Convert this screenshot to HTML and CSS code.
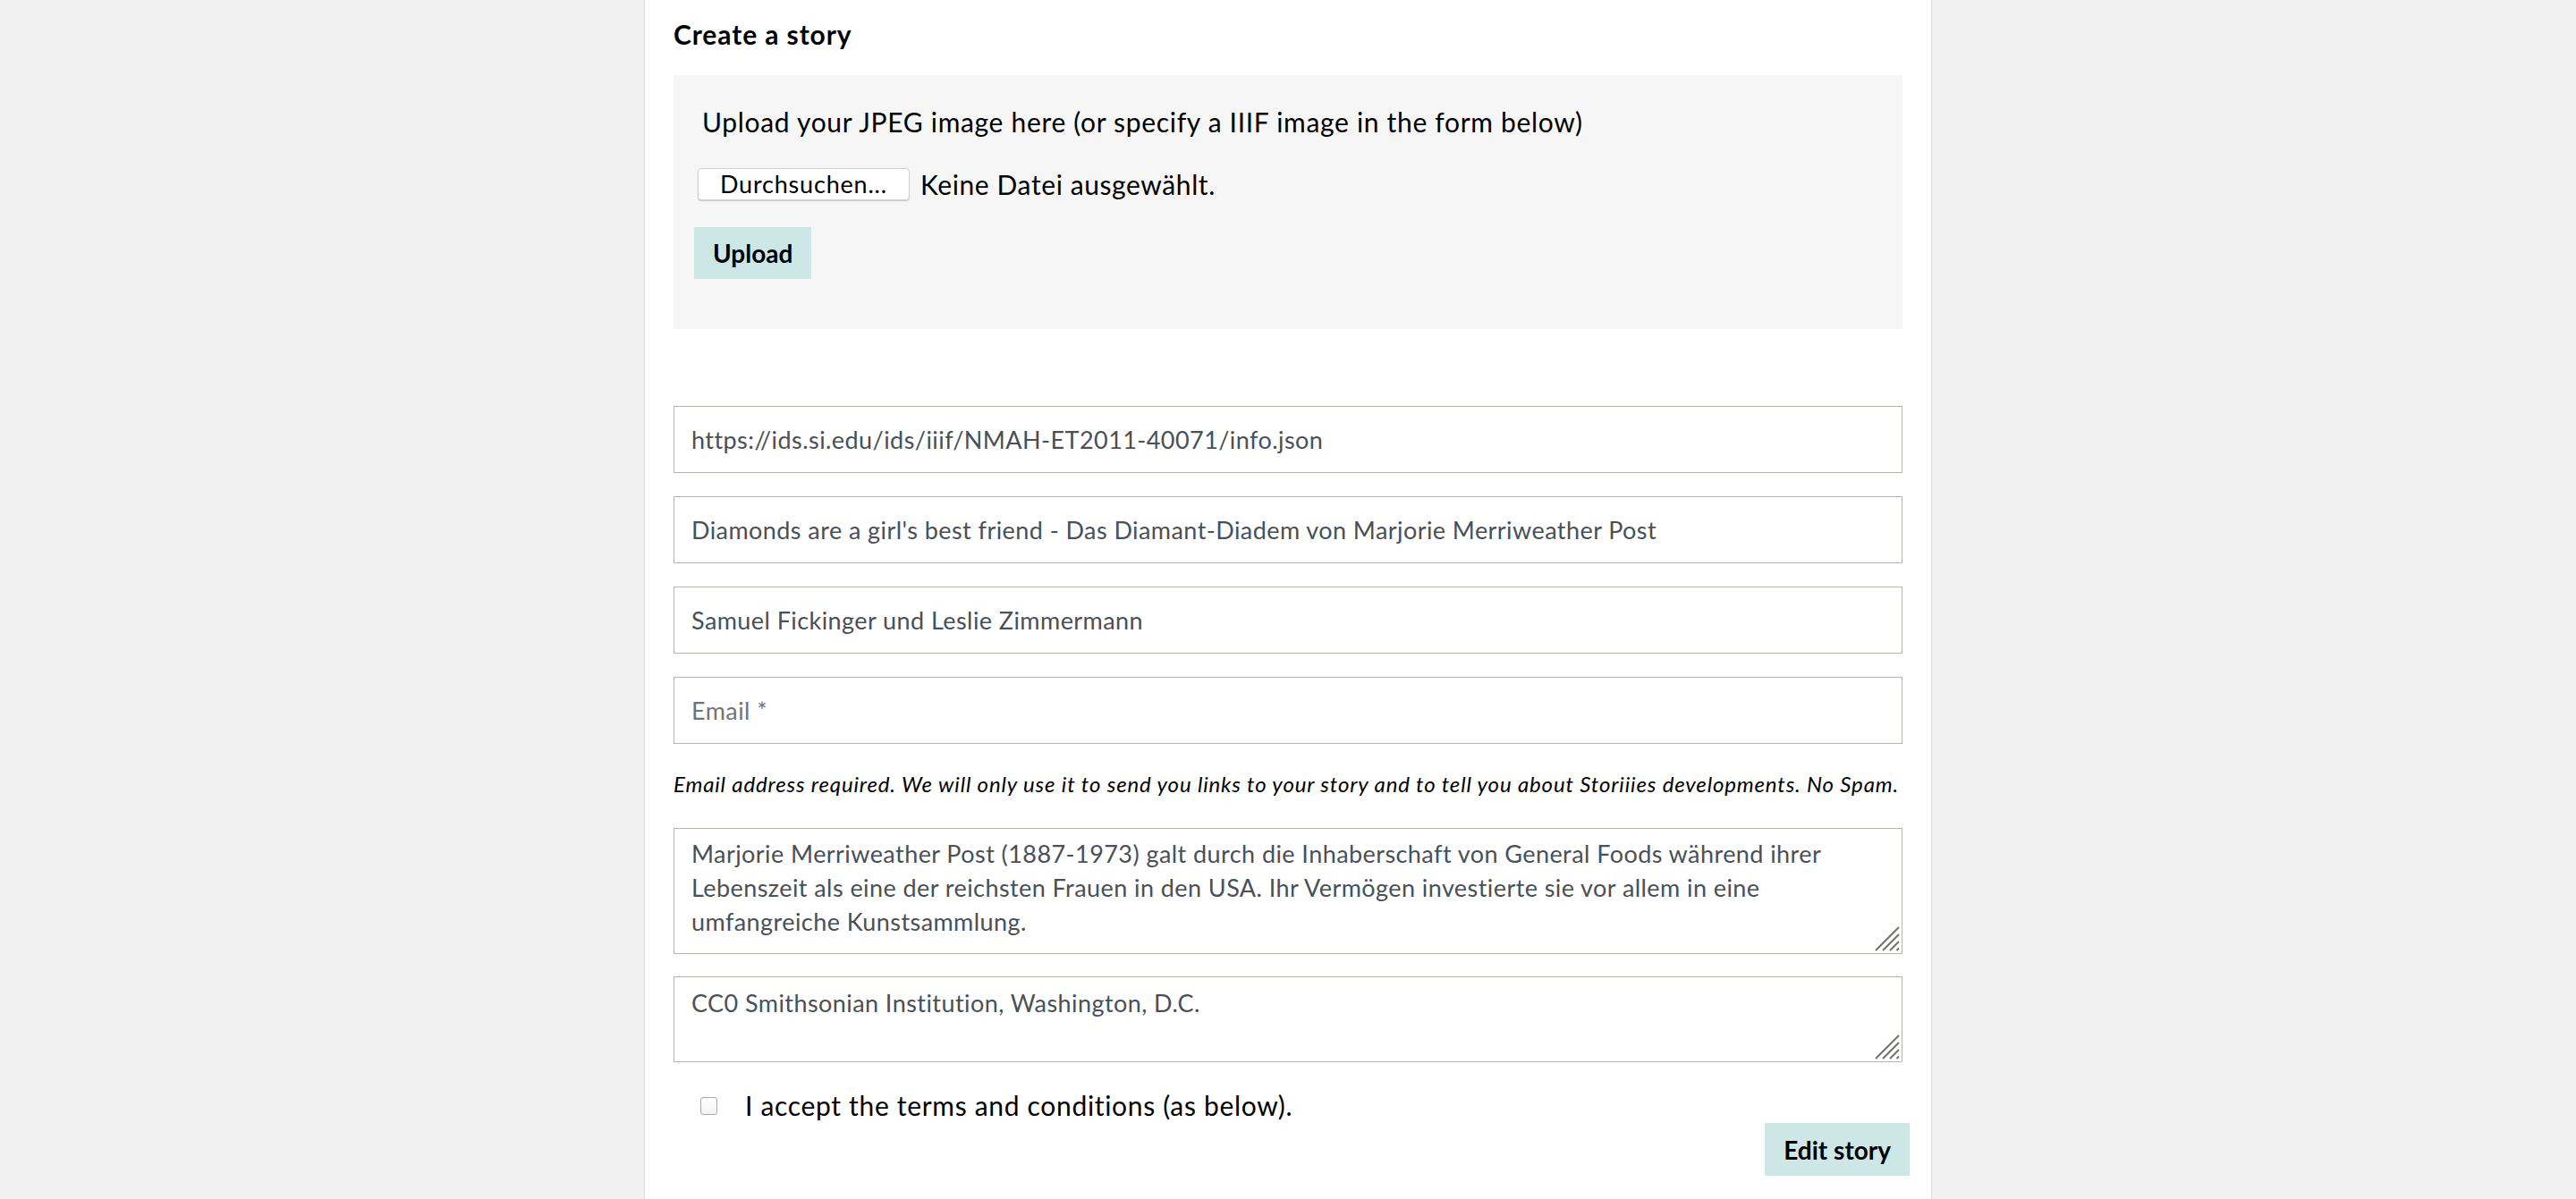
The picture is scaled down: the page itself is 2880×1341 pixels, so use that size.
FILE: index.html
```html
<!DOCTYPE html>
<html lang="en">
<head>
<meta charset="utf-8">
<title>Create a story</title>
<link rel="stylesheet" href="styles.css">
</head>
<body>
<main class="page">
  <h2 class="title">Create a story</h2>

  <section class="upload-box">
    <p class="upload-label">Upload your JPEG image here (or specify a IIIF image in the form below)</p>
    <div class="file-row">
      <button class="file-btn" type="button">Durchsuchen...</button>
      <span class="file-name">Keine Datei ausgewählt.</span>
    </div>
    <button class="btn btn-upload" type="button">Upload</button>
  </section>

  <form class="story-form">
    <input class="field" type="text" value="https://ids.si.edu/ids/iiif/NMAH-ET2011-40071/info.json">
    <input class="field" type="text" value="Diamonds are a girl's best friend - Das Diamant-Diadem von Marjorie Merriweather Post">
    <input class="field" type="text" value="Samuel Fickinger und Leslie Zimmermann">
    <input class="field" type="email" placeholder="Email *">
    <p class="note">Email address required. We will only use it to send you links to your story and to tell you about Storiiies developments. No Spam.</p>
    <div class="area-wrap">
      <textarea class="area area-desc">Marjorie Merriweather Post (1887-1973) galt durch die Inhaberschaft von General Foods während ihrer Lebenszeit als eine der reichsten Frauen in den USA. Ihr Vermögen investierte sie vor allem in eine umfangreiche Kunstsammlung.</textarea>
      <svg class="grip" width="28" height="28" viewBox="0 0 28 28"><g stroke="#6f6f6f" stroke-width="2" stroke-linecap="butt"><line x1="1" y1="27" x2="27" y2="1"/><line x1="9" y1="27" x2="27" y2="9"/><line x1="17" y1="27" x2="27" y2="17"/><line x1="24.5" y1="27" x2="27" y2="24.5"/></g></svg>
    </div>
    <div class="area-wrap">
      <textarea class="area area-rights">CC0 Smithsonian Institution, Washington, D.C.</textarea>
      <svg class="grip" width="28" height="28" viewBox="0 0 28 28"><g stroke="#6f6f6f" stroke-width="2" stroke-linecap="butt"><line x1="1" y1="27" x2="27" y2="1"/><line x1="9" y1="27" x2="27" y2="9"/><line x1="17" y1="27" x2="27" y2="17"/><line x1="24.5" y1="27" x2="27" y2="24.5"/></g></svg>
    </div>
    <label class="terms">
      <input class="check" type="checkbox">
      <span>I accept the terms and conditions (as below).</span>
    </label>
    <div class="actions">
      <button class="btn btn-edit" type="button">Edit story</button>
    </div>
  </form>
</main>
</body>
</html>
```

FILE: styles.css
```css
* { box-sizing: border-box; }

html, body {
  margin: 0;
  padding: 0;
}

body {
  background: #f1f1f1;
  font-family: Lato, "Open Sans", "Liberation Sans", sans-serif;
  color: #000;
}

.page {
  width: 1440px;
  min-height: 100vh;
  margin: 0 auto;
  background: #fff;
  border-left: 1px solid #dcdcdc;
  border-right: 1px solid #dcdcdc;
  padding: 20px 32px 0 32px;
}

.title {
  margin: 0 0 28px 0;
  font-size: 30px;
  line-height: 36px;
  font-weight: 700;
  letter-spacing: 0.9px;
}

.upload-box {
  background: #f6f6f6;
  height: 284px;
  padding-top: 34px;
}

.upload-label {
  margin: 0 0 0 32px;
  font-size: 30px;
  line-height: 36px;
  letter-spacing: 0.68px;
}

.file-row {
  display: flex;
  align-items: center;
  margin: 34px 0 0 27px;
  height: 36px;
}

.file-btn {
  height: 36px;
  padding: 0 24px;
  background: #fff;
  border: 1px solid #cfcfcf;
  border-radius: 4px;
  box-shadow: 0 1px 1px rgba(0,0,0,0.18);
  font-family: inherit;
  font-size: 27px;
  line-height: 34px;
  letter-spacing: 0.8px;
  color: #000;
}

.file-name {
  margin-left: 12px;
  font-size: 30px;
  letter-spacing: 0.6px;
}

.btn {
  display: inline-flex;
  align-items: center;
  border: 0;
  background: #cde6e6;
  color: #000;
  font-family: inherit;
  font-size: 28px;
  font-weight: 700;
}

.btn-upload {
  margin: 30px 0 0 23px;
  height: 58px;
  padding: 0 21px;
}

.story-form {
  display: flex;
  flex-direction: column;
  margin-top: 86px;
}

.field {
  display: block;
  width: 100%;
  height: 75px;
  margin: 0 0 26px 0;
  padding: 0 19px;
  border: 1px solid #b6b6ae;
  border-radius: 0;
  background: #fff;
  font-family: inherit;
  font-size: 27px;
  letter-spacing: 0.43px;
  color: #495057;
  outline: none;
}

.field::placeholder {
  color: #6c757d;
  opacity: 1;
}

.field:nth-of-type(4) {
  margin-bottom: 0;
}

.note {
  margin: 31px 0 35px 0;
  font-size: 24px;
  line-height: 28px;
  font-style: italic;
  letter-spacing: 0.85px;
  white-space: nowrap;
}

.area-wrap {
  position: relative;
  margin-bottom: 25px;
}

.area-wrap:nth-of-type(2) {
  margin-bottom: 0;
}

.area {
  display: block;
  width: 100%;
  padding: 9px 19px 0 19px;
  border: 1px solid #b6b6ae;
  border-radius: 0;
  background: #fff;
  font-family: inherit;
  font-size: 27px;
  line-height: 38px;
  letter-spacing: 0.43px;
  color: #495057;
  resize: none;
  overflow: hidden;
  outline: none;
}

.area-desc { height: 141px; }
.area-rights { height: 96px; padding-top: 10px; }

.grip {
  position: absolute;
  right: 3px;
  bottom: 3px;
}

.terms {
  display: flex;
  align-items: center;
  margin: 33px 0 0 30px;
  height: 30px;
  font-size: 30px;
  letter-spacing: 0.68px;
}

.check {
  appearance: none;
  -webkit-appearance: none;
  width: 19px;
  height: 20px;
  margin: 2px 31px 0 0;
  border: 1px solid #a9a9a9;
  border-radius: 3px;
  background: linear-gradient(#fff, #f3f3f3);
}

.actions {
  display: flex;
  justify-content: flex-end;
  margin: 0 -8px 0 0;
}

.btn-edit {
  height: 59px;
  padding: 0 21px;
  margin-top: 5px;
}
```
